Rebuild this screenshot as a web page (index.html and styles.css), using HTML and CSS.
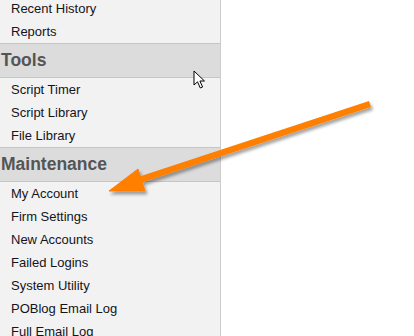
FILE: index.html
```html
<!DOCTYPE html>
<html lang="en">
<head>
    <meta charset="UTF-8">
    <title>Menu</title>
    <link rel="stylesheet" href="styles.css">
</head>
<body>
    <div class="page">
        <nav class="sidebar">
            <a class="nav-item" href="#">Recent History</a>
            <a class="nav-item" href="#">Reports</a>

            <div class="nav-header">Tools</div>
            <a class="nav-item" href="#">Script Timer</a>
            <a class="nav-item" href="#">Script Library</a>
            <a class="nav-item" href="#">File Library</a>

            <div class="nav-header">Maintenance</div>
            <a class="nav-item" href="#">My Account</a>
            <a class="nav-item" href="#">Firm Settings</a>
            <a class="nav-item" href="#">New Accounts</a>
            <a class="nav-item" href="#">Failed Logins</a>
            <a class="nav-item" href="#">System Utility</a>
            <a class="nav-item" href="#">POBlog Email Log</a>
            <a class="nav-item" href="#">Full Email Log</a>
        </nav>
        <div class="main"></div>
    </div>

    <!-- annotation arrow pointing at My Account -->
    <svg class="annotation" width="414" height="336" viewBox="0 0 414 336">
        <defs>
            <filter id="shadow" x="-10%" y="-10%" width="130%" height="140%">
                <feDropShadow dx="2" dy="3" stdDeviation="1.5" flood-color="#000" flood-opacity="0.35"/>
            </filter>
        </defs>
        <g filter="url(#shadow)" fill="#ff7f00" stroke="#ff7f00">
            <line x1="370" y1="104" x2="136" y2="181" stroke-width="6.5"/>
            <polygon points="109,191 138,169 145,191" stroke-width="1" stroke-linejoin="round"/>
        </g>
    </svg>

    <!-- mouse pointer -->
    <svg class="cursor" width="14" height="20" viewBox="0 0 14 20">
        <path d="M1 1 L1 15 L4.5 11.8 L7.3 18 L9.6 17 L6.9 11 L11.5 11 Z" fill="#fff" stroke="#000" stroke-width="1" stroke-linejoin="round"/>
    </svg>
</body>
</html>
```

FILE: styles.css
```css
body {
    margin: 0;
    background: #ffffff;
    font-family: 'Liberation Sans', Arial, sans-serif;
    overflow: hidden;
}

.page {
    display: flex;
    height: 336px;
}

.sidebar {
    width: 220px;
    margin-top: -3px;
    background: #f2f2f2;
    border-right: 1px solid #cccccc;
    display: flex;
    flex-direction: column;
}

.nav-item {
    display: block;
    padding-left: 11px;
    font-size: 13px;
    line-height: 23px;
    color: #14141c;
    text-decoration: none;
}

.nav-header {
    background: #dcdcdc;
    border-top: 1px solid #c6c6c6;
    border-bottom: 1px solid #c6c6c6;
    padding-left: 1px;
    font-size: 17.5px;
    font-weight: bold;
    line-height: 33px;
    color: #555555;
}

.main {
    flex: 1;
}

.annotation {
    position: absolute;
    left: 0;
    top: 0;
    pointer-events: none;
}

.cursor {
    position: absolute;
    left: 193px;
    top: 70px;
}
```
